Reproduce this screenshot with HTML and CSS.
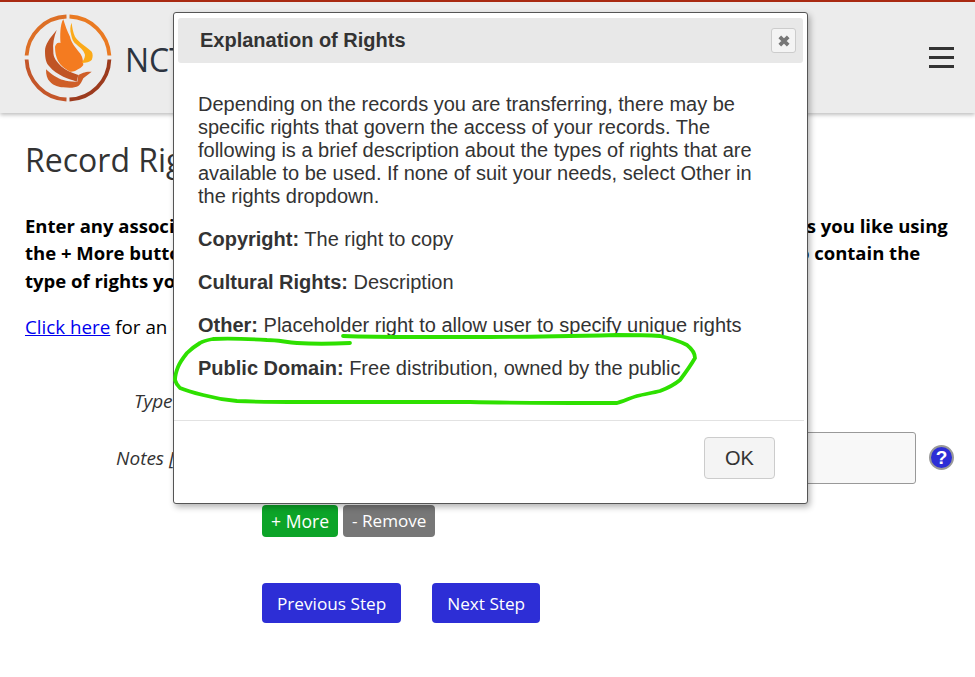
FILE: index.html
```html
<!DOCTYPE html>
<html lang="en">

<head>
    <meta charset="UTF-8">
    <title>Record Rights</title>
    <link rel="stylesheet" href="styles.css">
</head>

<body>
    <header class="topbar">
        <svg class="logo" viewBox="0 0 88 88" width="88" height="88">
            <g fill="none" stroke-width="3.800">
                <path d="M42.500 2.500A41.500 41.500 0 0 0 2.600 41.500" stroke="#dd6f26"/>
                <path d="M45.500 2.500A41.500 41.500 0 0 1 85.400 41.500" stroke="#ea7a22"/>
                <path d="M2.600 45.500A41.500 41.500 0 0 0 42.500 85.500" stroke="#c4562a"/>
                <path d="M85.400 45.500A41.500 41.500 0 0 1 45.500 85.500" stroke="#9c3b1e"/>
            </g>
            <path d="M32.700 16C26 24 21 30 21 37C21 44 22 49 25 52C29 57 34 60 39.300 62.700C44 65 49 66 52.700 67.700L54.300 61C48 59 42 56 37.700 52.700C33 48 29 44 29.300 37C28.500 30 30 23 32.700 16Z" fill="#c05424"/>
            <path d="M39.300 5.300C36 10 36 22 36.500 29C33 28 32 30 31 32.700C31 38 32 43 34 47C37 52 41 55 46 57.700C49 58 51 57 52.700 56C55 55 58 53 59.300 51C59 45 58 42 56 39.300C51 33 47 28 46 22.700C43 17 41 11 39.300 5.300Z" fill="#f47b20"/>
            <path d="M47.700 8.700C46 12 46 17 47 20C48 25 49 27 51 29.300C55 33 60 36 61 41C61 44 59 47 57.700 49C62 49 66 48 67.700 46C69 43 69 40 67.700 37.700C63 33 55 29 51 22.700C49 18 48 13 47.700 8.700Z" fill="#fbaa19"/>
            <path d="M22 55.300C22 61 23 65 26 67.700C30 72 35 73 39.300 73.300C45 74 51 74 54.300 72C57 70 58 67 59.300 64.300C62 62 65 60 67.700 57.700C64 57.500 61 58 59.300 58.700L54.300 61L53.300 67.700C48 68 43 67 39.300 66C34 65 27 60 22 55.300Z" fill="#cf5f28"/>
        </svg>
        <div class="brand">NCTC</div>
        <div class="burger"><span></span><span></span><span></span></div>
    </header>

    <main class="page">
        <h1 class="page-title">Record Rights</h1>
        <p class="intro">
            Enter any associated rights for your records. You can add as many additional rights as you like using<br>
            the + More button at the very bottom. If all the dropdown's options do not happen to contain the<br>
            type of rights you need, select Other.
        </p>
        <p class="example"><a href="#">Click here</a> for an example.</p>

        <div class="form">
            <div class="form-row row-type">
                <label class="form-label">Type of Rights</label>
                <div class="form-control"></div>
            </div>
            <div class="form-row">
                <label class="form-label">Notes [optional]</label>
                <div class="form-control">
                    <div class="notes-input"></div>
                    <span class="help">?</span>
                </div>
            </div>
            <div class="more-btns">
                <button class="btn btn-green">+ More</button>
                <button class="btn btn-gray">- Remove</button>
            </div>
            <div class="step-btns">
                <button class="btn btn-blue">Previous Step</button>
                <button class="btn btn-blue">Next Step</button>
            </div>
        </div>
    </main>

    <div class="modal">
        <div class="modal-head">
            <span class="modal-title">Explanation of Rights</span>
            <span class="modal-close">
                <svg viewBox="0 0 14 14" width="14" height="14"><path d="M2.800 2.800L11.200 11.200M11.200 2.800L2.800 11.200" stroke="#777" stroke-width="3.800" fill="none"/></svg>
            </span>
        </div>
        <div class="modal-body">
            <p>Depending on the records you are transferring, there may be specific rights that govern the access of your records. The following is a brief description about the types of rights that are available to be used. If none of suit your needs, select Other in the rights dropdown.</p>
            <p><b>Copyright:</b> The right to copy</p>
            <p><b>Cultural Rights:</b> Description</p>
            <p><b>Other:</b> Placeholder right to allow user to specify unique rights</p>
            <p><b>Public Domain:</b> Free distribution, owned by the public</p>
        </div>
        <div class="modal-foot">
            <button class="ok-btn">OK</button>
        </div>
    </div>

    <svg class="scribble" viewBox="0 0 975 677" width="975" height="677">
        <path d="M350 343C330 344 312 344 297 343C285 342 277 340 267 340C250 339 230 338 213 339C207 340 203 341 200 343C195 346 191 349 187 353C183 358 180 362 178 367C176 372 175 376 175 380C176 384 178 386 180 388C187 391 195 393 203 395C214 398 225 400 237 401C258 402 280 402 303 402C340 402 380 402 420 402C450 402 460 402 470 402C520 403 570 403 617 403C624 401 630 398 637 396C645 394 652 393 660 391C668 388 674 385 680 380C686 372 691 365 695 358C695 353 692 349 687 345C679 341 670 338 660 336C645 335 630 335 617 335C575 336 530 337 490 337C465 337 440 337 420 337C395 337 370 337 343 336" fill="none" stroke="#2ee000" stroke-width="3.800" stroke-linecap="round"/>
    </svg>
</body>

</html>
```

FILE: styles.css
```css
html, body {
    margin: 0;
    padding: 0;
}
body {
    width: 975px;
    height: 677px;
    overflow: hidden;
    background: #fff;
    color: #000;
    font-family: "Open Sans", "Noto Sans", sans-serif;
}

.topbar {
    height: 111px;
    background: #ececec;
    border-top: 2px solid #a92a12;
    box-shadow: 0 2px 4px rgba(0, 0, 0, .25);
    display: flex;
    align-items: center;
    padding: 0 21px 0 24px;
}
.logo {
    flex: none;
    margin-right: 13px;
}
.brand {
    font-size: 32px;
    color: #2c3440;
    flex: 1;
    padding-top: 4px;
}
.burger span {
    display: block;
    width: 25px;
    height: 2.500px;
    background: #333;
    margin: 6.500px 0;
}

.page {
    padding: 25px 25px 0;
}
.page-title {
    margin: 0;
    font-size: 32px;
    font-weight: 400;
    line-height: 44px;
    color: #333;
}
.intro {
    margin: 30px 0 0;
    font-size: 18.500px;
    line-height: 27.300px;
    font-weight: 700;
    white-space: nowrap;
}
.example {
    margin: 20px 0 0;
    font-size: 18.800px;
    line-height: 27px;
}
.example a {
    color: #00e;
}

.form {
    margin-top: 40px;
}
.form-row {
    display: flex;
    align-items: center;
    height: 52px;
}
.row-type {
    height: 40px;
    margin-bottom: 11px;
}
.form-label {
    width: 225px;
    flex: none;
    font-style: italic;
    font-size: 19px;
    color: #333;
    text-align: right;
    white-space: nowrap;
}
.form-control {
    display: flex;
    align-items: center;
    margin-left: 12px;
    flex: 1;
}
.notes-input {
    width: 654px;
    height: 52px;
    box-sizing: border-box;
    background: #f8f8f8;
    border: 1px solid #999;
    border-radius: 3px;
}
.help {
    width: 21px;
    height: 21px;
    margin-left: 13px;
    border-radius: 50%;
    background: #2d2ed6;
    border: 2px solid #999;
    color: #fff;
    font: 700 19px/21px "Liberation Sans", sans-serif;
    text-align: center;
}

.btn {
    border: 0;
    border-radius: 4px;
    color: #fff;
    font-family: inherit;
}
.more-btns {
    display: flex;
    gap: 5px;
    margin: 21px 0 0 237px;
}
.more-btns .btn {
    height: 32px;
    padding: 0 9px;
    font-size: 17.600px;
}
.btn-green {
    background: #0ca428;
}
.more-btns .btn-gray {
    background: #777;
    font-size: 17.100px;
}
.step-btns {
    display: flex;
    gap: 31px;
    margin: 46px 0 0 237px;
}
.btn-blue {
    background: #2d2ed6;
    height: 40px;
    padding: 1px 15px 0;
    font-size: 17.200px;
}

/* modal */
.modal {
    position: absolute;
    left: 173px;
    top: 12px;
    width: 635px;
    height: 492px;
    box-sizing: border-box;
    background: #fff;
    border: 1px solid #555;
    border-radius: 3px;
    box-shadow: 2px 3px 6px rgba(0, 0, 0, .3);
    padding: 5px 4px 0;
    color: #333;
    font-family: "Liberation Sans", Arial, sans-serif;
    font-size: 20px;
}
.modal-head {
    height: 45px;
    background: #e8e8e8;
    border-radius: 3px;
    display: flex;
    align-items: center;
    justify-content: space-between;
    padding: 0 7px 0 22px;
}
.modal-title {
    font-size: 20px;
    font-weight: 700;
}
.modal-close {
    width: 23px;
    height: 23px;
    display: flex;
    align-items: center;
    justify-content: center;
    background: #f4f4f4;
    border: 1px solid #ccc;
    border-radius: 3px;
}
.modal-body {
    padding: 30px 35px 0 20px;
    height: 357px;
    box-sizing: border-box;
    line-height: 23px;
}
.modal-body p {
    margin: 0 0 20px;
}
.modal-foot {
    margin: 0 0 0 -4px;
    width: 630px;
    border-top: 1px solid #e2e2e2;
    padding: 16px 0 0;
    display: flex;
    justify-content: flex-end;
}
.ok-btn {
    width: 71px;
    height: 42px;
    margin-right: 29px;
    background: #f4f4f4;
    border: 1px solid #ccc;
    border-radius: 4px;
    color: #333;
    font: 20px "Liberation Sans", Arial, sans-serif;
}

.scribble {
    position: absolute;
    left: 0;
    top: 0;
    pointer-events: none;
}
```
